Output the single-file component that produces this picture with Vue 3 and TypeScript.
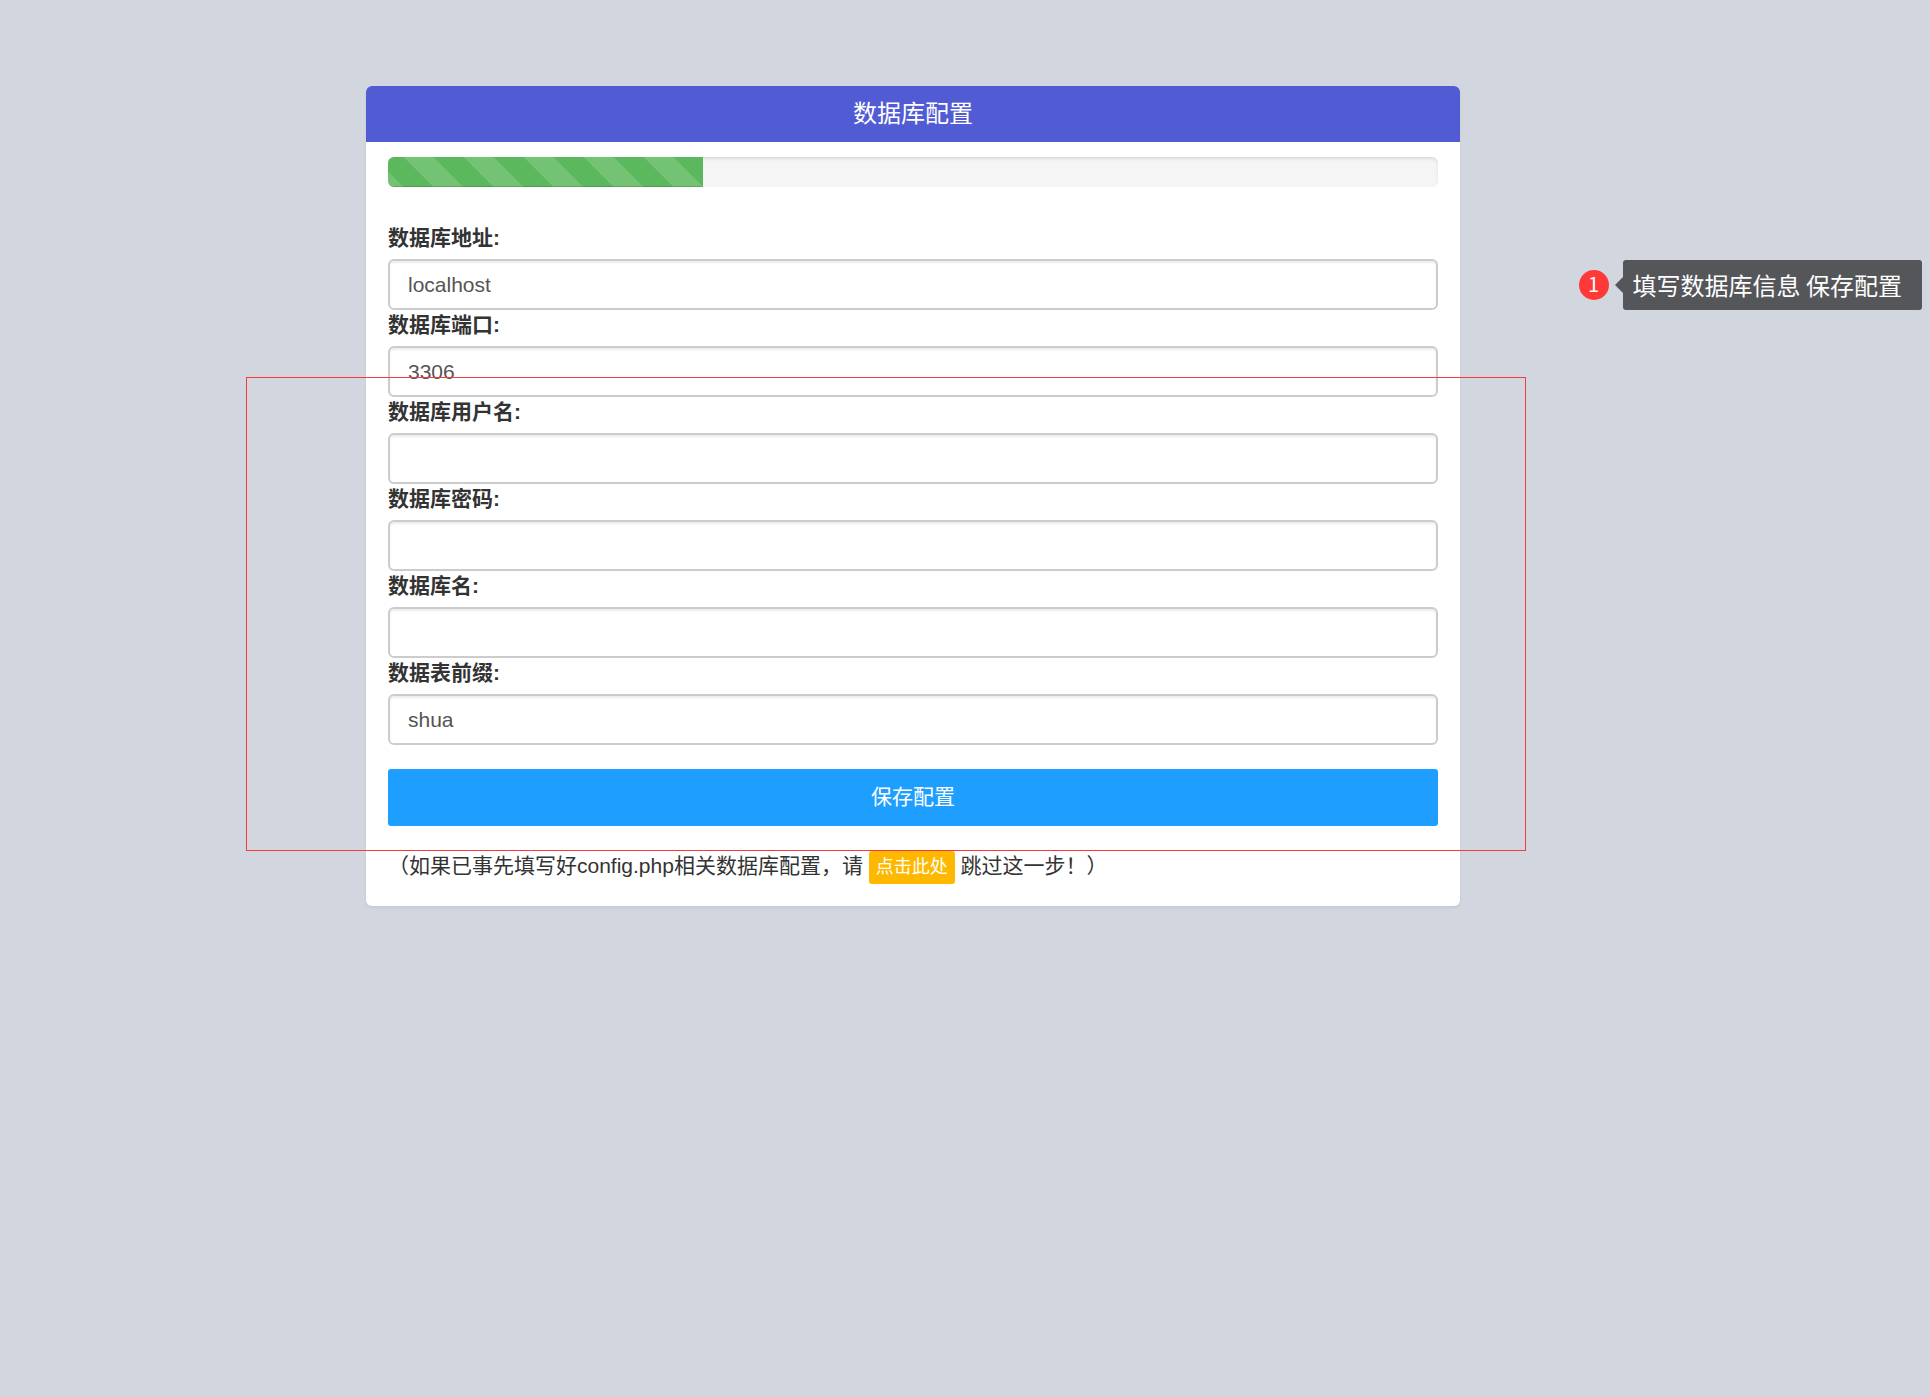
<script setup lang="ts">
import { reactive } from 'vue'

interface Field {
  id: string
  label: string
  type: string
  value: string
}

const progress = 30

const fields = reactive<Field[]>([
  { id: 'db_host', label: '数据库地址:', type: 'text', value: 'localhost' },
  { id: 'db_port', label: '数据库端口:', type: 'text', value: '3306' },
  { id: 'db_user', label: '数据库用户名:', type: 'text', value: '' },
  { id: 'db_pwd', label: '数据库密码:', type: 'password', value: '' },
  { id: 'db_name', label: '数据库名:', type: 'text', value: '' },
  { id: 'db_qz', label: '数据表前缀:', type: 'text', value: 'shua' },
])
</script>

<template>
  <main class="page">
    <div class="stage">
      <section class="card">
        <h1 class="title">数据库配置</h1>
        <div class="body">
          <div class="progress">
            <div class="bar" :style="{ width: progress + '%' }"></div>
          </div>
          <form class="form" @submit.prevent>
            <div v-for="f in fields" :key="f.id" class="field">
              <label :for="f.id">{{ f.label }}</label>
              <input :id="f.id" v-model="f.value" :type="f.type" autocomplete="off" />
            </div>
            <button type="submit" class="save">保存配置</button>
          </form>
          <p class="note">（如果已事先填写好config.php相关数据库配置，请 <a href="#" class="skip">点击此处</a> 跳过这一步！）</p>
        </div>
      </section>
      <div class="frame"></div>
    </div>
    <aside class="callout">
      <span class="num">1</span>
      <span class="tip">填写数据库信息 保存配置</span>
    </aside>
  </main>
</template>

<style>
body {
  background: #d2d6df;
}
</style>

<style scoped>
.page {
  position: relative;
  padding: 86px 470px 86px 366px;
  font-family: "Liberation Sans", "Noto Sans CJK SC", sans-serif;
  font-size: 21px;
  line-height: 30px;
  color: #333;
}
.stage {
  position: relative;
}
.card {
  background: #fff;
  border-radius: 6px;
  box-shadow: 0 2px 3px rgba(0, 0, 0, 0.06);
  overflow: hidden;
}
.title {
  margin: 0;
  background: #515bd4;
  color: #fff;
  font-size: 24px;
  font-weight: 400;
  line-height: 56px;
  text-align: center;
}
.body {
  padding: 15px 22px 22px;
}
.progress {
  height: 30px;
  margin-bottom: 36px;
  background: #f5f5f5;
  border-radius: 6px;
  box-shadow: inset 0 2px 3px rgba(0, 0, 0, 0.1);
  overflow: hidden;
}
.bar {
  height: 100%;
  background-color: #5cb85c;
  background-image: linear-gradient(45deg, rgba(255, 255, 255, 0.15) 25%, transparent 25%, transparent 50%, rgba(255, 255, 255, 0.15) 50%, rgba(255, 255, 255, 0.15) 75%, transparent 75%, transparent);
  background-size: 60px 60px;
  background-position: 16px 0;
  box-shadow: inset 0 -1px 0 rgba(0, 0, 0, 0.15);
}
.form {
  display: flex;
  flex-direction: column;
}
.field {
  display: flex;
  flex-direction: column;
}
.field label {
  margin-bottom: 6px;
  font-weight: 700;
}
.field input {
  box-sizing: border-box;
  width: 100%;
  height: 51px;
  padding: 0 18px;
  border: 2px solid #ccc;
  border-radius: 6px;
  background: #fff;
  box-shadow: inset 0 2px 2px rgba(0, 0, 0, 0.075);
  color: #555;
  font: inherit;
  outline: none;
}
.save {
  height: 57px;
  margin-top: 24px;
  padding: 0 0 2px;
  border: 0;
  border-radius: 3px;
  background: #1e9fff;
  color: #fff;
  font: inherit;
}
.note {
  margin: 23px 0 0;
  line-height: 34px;
}
.skip {
  display: inline-block;
  padding: 0 7px;
  border-radius: 3px;
  background: #ffb800;
  color: #fff;
  font-size: 18px;
  line-height: 33px;
  text-decoration: none;
}
.frame {
  position: absolute;
  top: 291px;
  right: -66px;
  bottom: 55px;
  left: -120px;
  border: 1px solid #f93a3a;
  pointer-events: none;
}
.callout {
  position: absolute;
  top: 260px;
  right: 8px;
  display: flex;
  align-items: center;
  gap: 14px;
  color: #fff;
}
.num {
  width: 30px;
  height: 30px;
  border-radius: 50%;
  background: #ff3938;
  font-family: "Noto Sans CJK SC", sans-serif;
  font-size: 20px;
  line-height: 28px;
  text-align: center;
}
.tip {
  position: relative;
  padding: 0 20px 0 10px;
  border-radius: 3px;
  background: #55565a;
  font-family: "Noto Sans CJK SC", sans-serif;
  font-size: 24px;
  line-height: 50px;
}
.tip::before {
  content: "";
  position: absolute;
  top: 17px;
  left: -8px;
  border: solid transparent;
  border-width: 8px 8px 8px 0;
  border-right-color: #55565a;
}
</style>
